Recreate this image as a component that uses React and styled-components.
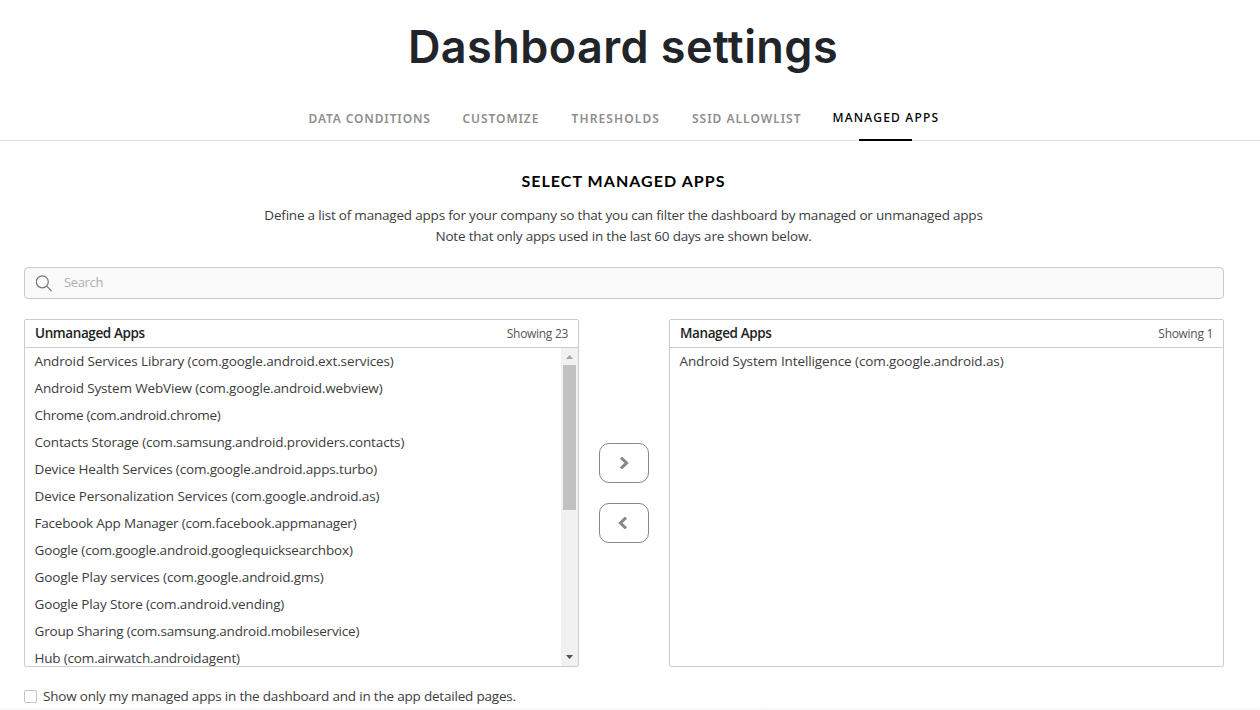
import React from "react";
import styled, { createGlobalStyle, css } from "styled-components";

const GlobalStyle = createGlobalStyle`
  *, *::before, *::after { box-sizing: border-box; }
  html, body { margin: 0; padding: 0; background: #fff; overflow: hidden; }
  body {
    font-family: "Open Sans", "Noto Sans", sans-serif;
    font-size: 13.5px;
    font-weight: 400;
    letter-spacing: -0.2px;
    color: #3c3c3c;
  }
`;

const Page = styled.div`
  height: 710px;
  display: flex;
  flex-direction: column;
  background: #fff;
`;

const Title = styled.h1`
  flex: none;
  width: 1246px;
  height: 95px;
  margin: 0;
  text-align: center;
  font-family: Inter, sans-serif;
  font-size: 45px;
  font-weight: 600;
  line-height: 93px;
  letter-spacing: 0.42px;
  color: #212529;
`;

const TabBar = styled.nav`
  flex: none;
  height: 46px;
  padding-left: 308.5px;
  display: flex;
  border-bottom: 1px solid #dedfe2;
`;

const Tab = styled.a`
  width: ${(p) => p.$width}px;
  height: 46px;
  display: flex;
  flex-direction: column;
  align-items: flex-start;
  justify-content: space-between;
  font-family: "Noto Sans", sans-serif;
  font-size: 12px;
  font-weight: 600;
  line-height: 18px;
  letter-spacing: ${(p) => p.$tracking}px;
  color: #8e8e8e;
  padding-top: 15px;
  white-space: nowrap;
  ${(p) =>
    p.$active &&
    css`
      padding-top: 14px;
      font-weight: 500;
      color: #000;
      &::after {
        content: "";
        width: 53px;
        height: 2px;
        margin-left: 26.5px;
        background: #000;
      }
    `}
`;

const Content = styled.main`
  flex: 1;
  min-height: 0;
  width: 1248px;
  padding: 0 24px;
  display: flex;
  flex-direction: column;
`;

const Heading = styled.h2`
  flex: none;
  margin: 28px 1px 0 0;
  text-align: center;
  font-family: Lato, sans-serif;
  font-size: 16px;
  font-weight: 700;
  line-height: 24px;
  letter-spacing: 1.05px;
  color: #000;
`;

const Intro = styled.p`
  flex: none;
  margin: 12px 1px 0 0;
  text-align: center;
  line-height: 21px;
`;

const SearchBox = styled.label`
  flex: none;
  height: 32px;
  margin-top: 20px;
  padding-left: 11px;
  display: flex;
  align-items: center;
  gap: 11px;
  border: 1px solid #ccc;
  border-radius: 4px;
  background: #fafafa;
`;

const SearchInput = styled.input`
  flex: 1;
  border: 0;
  padding: 0 0 2px;
  outline: 0;
  background: transparent;
  font: inherit;
  font-size: 13px;
  letter-spacing: -0.35px;
  &::placeholder { color: #b0b0b0; }
`;

const Transfer = styled.section`
  flex: none;
  display: flex;
  margin-top: 20px;
  height: 348px;
`;

const Panel = styled.div`
  width: 555px;
  display: flex;
  flex-direction: column;
  border: 1px solid #ccc;
  border-radius: 2px;
  overflow: hidden;
`;

const PanelHeader = styled.header`
  flex: none;
  height: 28px;
  padding: 0 10px;
  display: flex;
  align-items: center;
  justify-content: space-between;
  border-bottom: 1px solid #ccc;
`;

const PanelTitle = styled.strong`
  padding-bottom: 2px;
  font-weight: 600;
  letter-spacing: -0.4px;
  color: #212121;
`;

const Count = styled.span`
  font-size: 12px;
  letter-spacing: -0.3px;
  color: #555;
`;

const PanelBody = styled.div`
  flex: 1;
  min-height: 0;
  display: flex;
`;

const AppList = styled.ul`
  flex: 1;
  margin: 0;
  padding: 0 9.5px;
  list-style: none;
  overflow: hidden;
`;

const AppRow = styled.li`
  height: 27px;
  line-height: 26px;
  white-space: nowrap;
  letter-spacing: ${(p) => p.$tracking}px;
`;

const Scrollbar = styled.div`
  width: 17px;
  display: flex;
  flex-direction: column;
  align-items: center;
  background: #f1f1f1;
`;

const ScrollArrow = styled.svg`
  flex: none;
  width: 17px;
  height: 17px;
  display: block;
  fill: ${(p) => (p.$enabled ? "#505050" : "#a3a3a3")};
`;

const Thumb = styled.div`
  width: 13px;
  height: 145px;
  margin-bottom: auto;
  background: #c1c1c1;
`;

const Actions = styled.div`
  width: 90px;
  display: flex;
  flex-direction: column;
  align-items: center;
  justify-content: center;
  gap: 20px;
`;

const MoveButton = styled.button`
  width: 50px;
  height: 40px;
  padding: 0;
  display: flex;
  align-items: center;
  justify-content: center;
  border: 1px solid #888;
  border-radius: 10px;
  background: #fff;
`;

const Option = styled.label`
  display: flex;
  flex: none;
  align-items: center;
  gap: 6px;
  margin-top: 19px;
  line-height: 20px;
`;

const Checkbox = styled.input`
  appearance: none;
  width: 13px;
  height: 13px;
  margin: 0;
  border: 1px solid #c4c4c4;
  border-radius: 2px;
  background: #fff;
`;

const BottomFade = styled.div`
  flex: none;
  height: 3px;
  background: linear-gradient(#fcfcfc, #f8f8f8);
`;

const tabs = [
  { label: "DATA CONDITIONS", width: 154, tracking: 0.86 },
  { label: "CUSTOMIZE", width: 109, tracking: 0.93 },
  { label: "THRESHOLDS", width: 120.5, tracking: 1.12 },
  { label: "SSID ALLOWLIST", width: 140.5, tracking: 0.99 },
  { label: "MANAGED APPS", width: 107, tracking: 1.22, active: true },
];

const unmanaged = [
  ["Android Services Library (com.google.android.ext.services)", -0.12],
  ["Android System WebView (com.google.android.webview)", -0.15],
  ["Chrome (com.android.chrome)", -0.3],
  ["Contacts Storage (com.samsung.android.providers.contacts)", -0.15],
  ["Device Health Services (com.google.android.apps.turbo)", -0.15],
  ["Device Personalization Services (com.google.android.as)", -0.11],
  ["Facebook App Manager (com.facebook.appmanager)", -0.21],
  ["Google (com.google.android.googlequicksearchbox)", -0.15],
  ["Google Play services (com.google.android.gms)", -0.11],
  ["Google Play Store (com.android.vending)", -0.15],
  ["Group Sharing (com.samsung.android.mobileservice)", -0.18],
  ["Hub (com.airwatch.androidagent)", -0.18],
];

const managed = [["Android System Intelligence (com.google.android.as)", -0.1]];

function Rows({ apps }) {
  return (
    <AppList>
      {apps.map(([name, tracking]) => (
        <AppRow key={name} $tracking={tracking}>{name}</AppRow>
      ))}
    </AppList>
  );
}

export default function App() {
  return (
    <Page>
      <GlobalStyle />
      <Title>Dashboard settings</Title>
      <TabBar>
        {tabs.map((t) => (
          <Tab key={t.label} $width={t.width} $tracking={t.tracking} $active={t.active}>
            {t.label}
          </Tab>
        ))}
      </TabBar>
      <Content>
        <Heading>SELECT MANAGED APPS</Heading>
        <Intro>
          Define a list of managed apps for your company so that you can filter the dashboard by managed or unmanaged apps
          <br />
          Note that only apps used in the last 60 days are shown below.
        </Intro>
        <SearchBox>
          <svg width="17" height="17" viewBox="0.5 0 17 17" fill="none" stroke="#757575" strokeWidth="1.2">
            <circle cx="6.8" cy="6.8" r="6" />
            <path d="M11.2 11.2 L16 16" />
          </svg>
          <SearchInput placeholder="Search" />
        </SearchBox>
        <Transfer>
          <Panel>
            <PanelHeader>
              <PanelTitle>Unmanaged Apps</PanelTitle>
              <Count>Showing 23</Count>
            </PanelHeader>
            <PanelBody>
              <Rows apps={unmanaged} />
              <Scrollbar>
                <ScrollArrow viewBox="0 0 17 17"><path d="M5 11 L8.5 7 L12 11 Z" /></ScrollArrow>
                <Thumb />
                <ScrollArrow $enabled viewBox="0 0 17 17"><path d="M5 6 L8.5 10 L12 6 Z" /></ScrollArrow>
              </Scrollbar>
            </PanelBody>
          </Panel>
          <Actions>
            <MoveButton aria-label="Add to managed apps">
              <svg width="10" height="12" viewBox="0 0 10 12" fill="none" stroke="#888" strokeWidth="3">
                <path d="M2 0.6 L7.6 6 L2 11.4" />
              </svg>
            </MoveButton>
            <MoveButton aria-label="Remove from managed apps">
              <svg width="12" height="12" viewBox="0 0 12 12" fill="none" stroke="#888" strokeWidth="3">
                <path d="M8 0.6 L2.4 6 L8 11.4" />
              </svg>
            </MoveButton>
          </Actions>
          <Panel>
            <PanelHeader>
              <PanelTitle>Managed Apps</PanelTitle>
              <Count>Showing 1</Count>
            </PanelHeader>
            <PanelBody>
              <Rows apps={managed} />
            </PanelBody>
          </Panel>
        </Transfer>
        <Option>
          <Checkbox type="checkbox" />
          Show only my managed apps in the dashboard and in the app detailed pages.
        </Option>
      </Content>
      <BottomFade />
    </Page>
  );
}
